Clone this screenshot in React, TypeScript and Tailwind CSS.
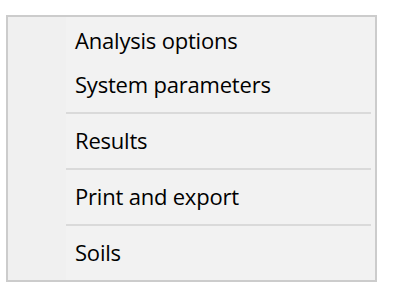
import React from 'react';

type Entry = { label: string } | { sep: true };

const entries: Entry[] = [
  { label: 'Analysis options' },
  { label: 'System parameters' },
  { sep: true },
  { label: 'Results' },
  { sep: true },
  { label: 'Print and export' },
  { sep: true },
  { label: 'Soils' },
];

export default function App() {
  return (
    <div className="w-[394px] h-[301px] bg-white pt-[15px] pl-[6px]" style={{ fontFamily: '"Open Sans", "Noto Sans", sans-serif' }}>
      {/* Context menu */}
      <div className="w-[371px] h-[267px] border-2 border-[#cccccc] bg-[#f2f2f2] flex">
        {/* Icon gutter */}
        <div className="w-[58px] shrink-0 bg-[#f0f0f0]" />
        <div className="flex-1 flex flex-col pt-[1px] pr-[4px]">
          {entries.map((e, i) =>
            'sep' in e ? (
              <div key={i} className="pt-[6px] pb-[4px]">
                <div className="h-[2px] bg-[#dadada]" />
              </div>
            ) : (
              <div key={i} className="h-[44px] leading-[44px] pl-[9px] text-[22px] font-medium text-black tracking-[-0.2px]">
                {e.label}
              </div>
            )
          )}
        </div>
      </div>
    </div>
  );
}
